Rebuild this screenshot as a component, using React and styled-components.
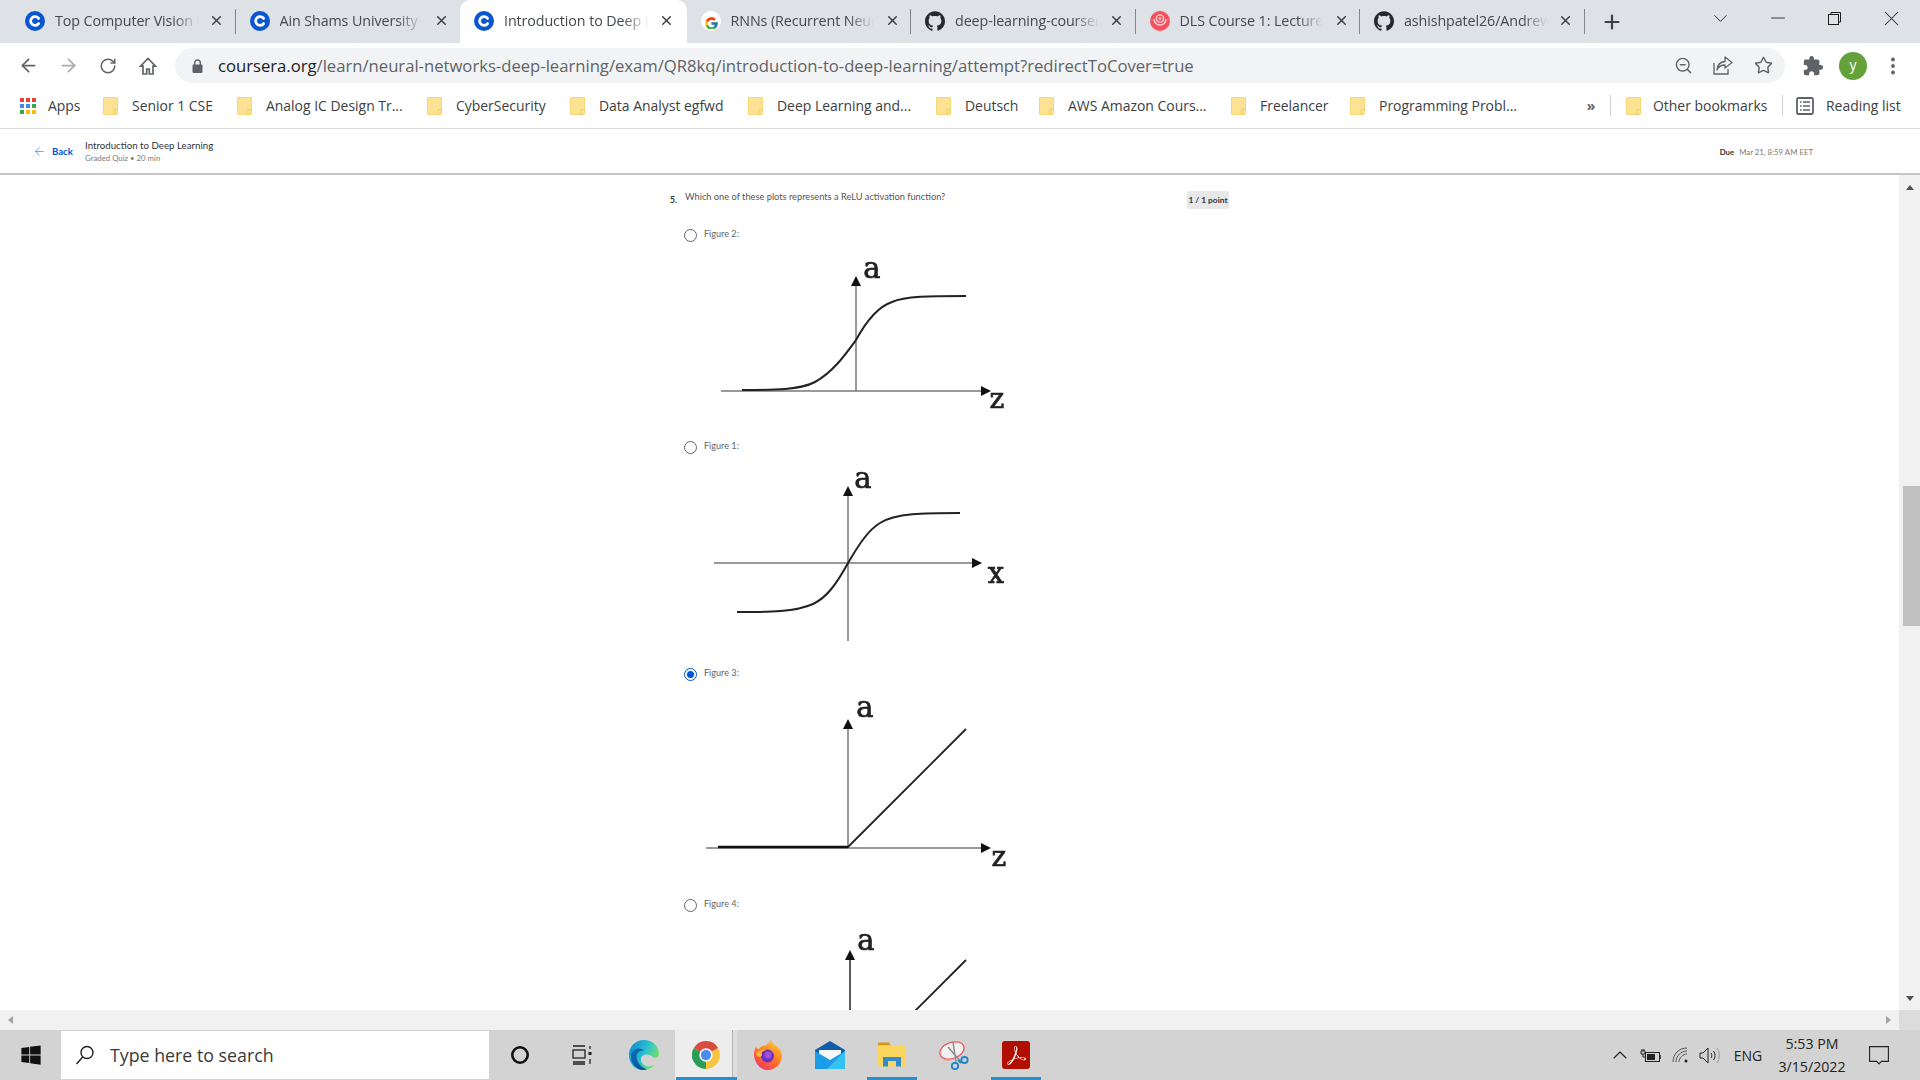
import React from "react";
import styled, { createGlobalStyle } from "styled-components";
import { ArrowLeft, ArrowRight, RotateCw, ZoomOut, Star, X, Plus, ChevronDown, ChevronUp, Minus } from "lucide-react";
import { FaWindows } from "react-icons/fa";
import { FcGoogle } from "react-icons/fc";
import { SiGithub, SiAdobeacrobatreader } from "react-icons/si";
import { MdExtension } from "react-icons/md";

const UI = `"Open Sans", "Noto Sans", sans-serif`;
const WEB = `"Source Sans Pro", "Lato", "Noto Sans", sans-serif`;

const Global = createGlobalStyle`
  html, body { margin: 0; padding: 0; height: 100%; overflow: hidden; background: #fff; }
  #root { height: 100%; }
  * { box-sizing: border-box; }
`;

const Screen = styled.div`
  width: 1920px; height: 1080px; display: flex; flex-direction: column; font-family: ${UI}; overflow: hidden;
`;

/* ---------- tab strip ---------- */
const TabStrip = styled.div`
  height: 43px; flex: none; background: #dee1e6; display: flex; padding-left: 11px; align-items: stretch;
`;
const Tab = styled.div`
  position: relative; flex: none; width: ${(p) => (p.$active ? 226.5 : 224.5)}px; height: 43px; display: flex; align-items: center;
  padding: 0 ${(p) => (p.$active ? 12 : 11)}px 2px 14px; gap: 10px;
  background: ${(p) => (p.$active ? "#fff" : "transparent")};
  border-radius: ${(p) => (p.$active ? "10px 10px 0 0" : "0")};
  &::after {
    content: ""; position: absolute; right: 0; top: 9px; width: 1px; height: 25px;
    background: ${(p) => (p.$sep ? "#80868b" : "transparent")};
  }
`;
const Fav = styled.span`
  flex: none; width: 20px; height: 20px; display: flex; align-items: center; justify-content: center;
`;
const TabTitle = styled.span`
  flex: 1; min-width: 0; overflow: hidden; white-space: nowrap; font-size: 14.3px; color: #45494e; letter-spacing: -0.1px;
  -webkit-mask-image: linear-gradient(to right, #000 82%, transparent 100%);
  mask-image: linear-gradient(to right, #000 82%, transparent 100%);
`;
const TabClose = styled.span`
  flex: none; width: 16px; height: 16px; display: flex; align-items: center; justify-content: center; color: #3c4043;
`;
const NewTab = styled.span`
  flex: none; width: 54px; display: flex; align-items: center; justify-content: center; color: #3c4043;
`;
const WindowControls = styled.div`
  margin-left: auto; display: flex; height: 36px;
`;
const WinButton = styled.span`
  width: ${(p) => p.$w || 57}px; height: 36px; display: flex; align-items: center; justify-content: center; color: #2b2b2b;
`;

/* ---------- toolbar ---------- */
const Toolbar = styled.div`
  height: 41px; flex: none; background: #fff; display: flex; align-items: flex-start; padding: 5px 7px 0 8px;
`;
const NavButton = styled.span`
  flex: none; width: 40px; height: 35px; display: flex; align-items: center; justify-content: center;
  color: ${(p) => (p.$disabled ? "#a8abaf" : "#5f6368")};
`;
const AddressPill = styled.div`
  flex: 1; height: 35px; margin: 0 8px 0 7px; background: #f1f3f4; border-radius: 18px; display: flex; align-items: center;
  padding: 0 2px 0 15px;
`;
const LockBox = styled.span`
  flex: none; width: 14px; display: flex; justify-content: center; margin-right: 14px;
`;
const Url = styled.span`
  flex: 1; font-size: 16.7px; white-space: nowrap; color: #5f6368; letter-spacing: -0.02px;
`;
const UrlHost = styled.span`
  color: #202124;
`;
const Avatar = styled.span`
  width: 28px; height: 28px; border-radius: 50%; background: #64a13a; color: #fff; font-size: 14px;
  display: flex; align-items: center; justify-content: center; padding-bottom: 3px;
`;

/* ---------- bookmarks ---------- */
const BookmarkBar = styled.div`
  height: 45px; flex: none; background: #fff; display: flex; align-items: center; padding: 0 0 1px 20px; border-bottom: 1px solid #dadce0;
`;
const Bookmark = styled.span`
  flex: none; width: ${(p) => (p.$w ? `${p.$w}px` : "auto")}; display: flex; align-items: center; gap: ${(p) => p.$gap || 14}px;
  font-size: 13.95px; color: #3c4043; white-space: nowrap; margin-left: ${(p) => p.$ml || 0}px;
`;
const AppsGrid = styled.span`
  display: grid; grid-template-columns: repeat(3, 4px); grid-auto-rows: 4px; gap: 2px; flex: none; width: 16px;
`;
const AppsDot = styled.i`
  display: block; background: ${(p) => p.$c};
`;
const Overflow = styled.span`
  flex: none; width: 16px; text-align: center; font-size: 14px; font-weight: 700; color: #5f6368;
`;
const BarSep = styled.span`
  flex: none; width: 1px; height: 21px; background: #cfd1d4; margin-left: ${(p) => p.$ml || 0}px;
`;

/* ---------- course header ---------- */
const CourseHeader = styled.header`
  height: 46px; flex: none; background: #fff; border-bottom: 2px solid #c6c6c6; display: flex; align-items: center;
  padding: 0 107px 0 33px; font-family: ${WEB};
`;
const BackLink = styled.span`
  display: flex; align-items: center; gap: 6px; color: #0056d2; font-size: 9.6px; font-weight: 700; width: 52px;
`;
const CourseInfo = styled.div`
  display: flex; flex-direction: column; gap: 4px; margin-top: 1px;
`;
const CourseTitle = styled.span`
  font-size: 9.7px; color: #333; line-height: 10px;
`;
const CourseSub = styled.span`
  font-size: 7.8px; color: #7a7a7a; line-height: 9px;
`;
const DueInfo = styled.span`
  margin: 2px 0 0 auto; font-size: 7.8px; color: #7a7a7a; display: flex; gap: 5px;
`;
const DueLabel = styled.b`
  color: #333; font-weight: 700;
`;

/* ---------- page ---------- */
const PageArea = styled.div`
  flex: 1; min-height: 0; display: flex; flex-direction: column;
`;
const PageRow = styled.div`
  flex: 1; min-height: 0; display: flex;
`;
const Content = styled.main`
  flex: 1; min-width: 0; overflow: hidden; padding: 16px 0 0 670px; font-family: ${WEB};
`;
const QuestionRow = styled.div`
  width: 559px; height: 34px; display: flex; align-items: flex-start;
`;
const QNumber = styled.b`
  width: 15px; font-size: 8.6px; color: #333; margin-top: 2px; line-height: 14px;
`;
const QText = styled.span`
  font-size: 9.25px; color: #555; line-height: 12px;
`;
const PointBadge = styled.span`
  margin-left: auto; width: 42px; height: 18px; background: #e8e8e8; border-radius: 2px; font-size: 8.4px; font-weight: 700; color: #333;
  display: flex; align-items: center; justify-content: center;
`;
const OptionRow = styled.div`
  height: 20px; display: flex; align-items: center; padding-left: 14px;
`;
const Radio = styled.span`
  flex: none; width: 13px; height: 13px; border-radius: 50%; border: 1.4px solid ${(p) => (p.$on ? "#0056d2" : "#666")}; display: flex; align-items: center; justify-content: center;
  &::after { content: ""; width: 7px; height: 7px; border-radius: 50%; background: ${(p) => (p.$on ? "#0056d2" : "transparent")}; }
`;
const OptionLabel = styled.span`
  margin: -3px 0 0 7px; font-size: 9.1px; color: #666;
`;
const PlotBox = styled.svg`
  display: block; margin-left: 30px; filter: blur(0.35px);
`;
const PlotLetter = styled.text`
  font-family: "DejaVu Serif", "Liberation Serif", serif; fill: #222; stroke: #222; stroke-width: 0.7px; text-anchor: middle;
`;

/* ---------- scrollbars ---------- */
const VScroll = styled.div`
  flex: none; width: 21px; background: #f1f1f1; display: flex; flex-direction: column; align-items: center; padding-top: 10px;
`;
const Thumb = styled.div`
  width: 17px; align-self: flex-end; height: 140px; background: #c1c1c1; margin-top: 296px;
`;
const ScrollArrow = styled.span`
  width: 0; height: 0; border-left: 4.5px solid transparent; border-right: 4.5px solid transparent;
  ${(p) => (p.$up ? "border-bottom: 5px solid #505050;" : "border-top: 5px solid #505050;")}
  margin-top: ${(p) => p.$mt || 0}px;
`;
const HScroll = styled.div`
  flex: none; height: 20px; background: #f1f1f1; display: flex; align-items: center; padding-left: 8px;
`;
const HArrow = styled.span`
  width: 0; height: 0; border-top: 4.5px solid transparent; border-bottom: 4.5px solid transparent;
  ${(p) => (p.$left ? "border-right: 5px solid #a3a3a3;" : "border-left: 5px solid #a3a3a3; margin: 0 8px 0 auto;")}
`;
const HCorner = styled.span`
  flex: none; width: 21px; background: #dcdcdc; height: 20px;
`;

/* ---------- taskbar ---------- */
const Taskbar = styled.footer`
  height: 50px; flex: none; background: #d3d3d3; display: flex; align-items: stretch; font-family: ${UI};
`;
const StartSlot = styled.span`
  flex: none; width: 61px; display: flex; align-items: center; justify-content: center;
`;
const SearchBox = styled.div`
  flex: none; width: 428px; margin-top: 1px; margin-bottom: 1px; background: #fff; display: flex; align-items: center; padding-left: 14px; gap: 15px;
  font-size: 17.8px; color: #3a3a3a;
`;
const TaskSlot = styled.span`
  position: relative; flex: none; width: 62px; display: flex; align-items: center; justify-content: center;
  background: ${(p) => (p.$focus ? "linear-gradient(to right, #ededed 57px, #b5b5b5 57px, #b5b5b5 58px, #dedede 58px)" : "transparent")};
  &::after {
    content: ""; position: absolute; bottom: 0; height: 3px; background: #2a90cc;
    left: ${(p) => (p.$focus ? 1 : 6)}px; right: ${(p) => (p.$focus ? 0 : 6)}px;
    display: ${(p) => (p.$open ? "block" : "none")};
  }
`;
const Tray = styled.div`
  margin-left: auto; display: flex; align-items: stretch; padding-right: 13px; color: #222;
`;
const TraySlot = styled.span`
  flex: none; width: ${(p) => p.$w}px; display: flex; align-items: center; justify-content: center; font-size: 14px;
`;
const Clock = styled.span`
  flex: none; width: 78px; display: flex; flex-direction: column; align-items: center; justify-content: center; font-size: 14.2px; line-height: 23px; color: #222;
`;

/* ---------- icons ---------- */
const CourseraIcon = () => (
  <svg width="20" height="20" viewBox="0 0 20 20">
    <circle cx="10" cy="10" r="10" fill="#0a56d0" />
    <path d="M13.6 12.6a4.4 4.4 0 1 1 0-5.2" fill="none" stroke="#fff" strokeWidth="2.8" strokeLinecap="round" />
  </svg>
);
const DlsIcon = () => (
  <svg width="20" height="20" viewBox="0 0 20 20">
    <circle cx="10" cy="10" r="10" fill="#f4525f" />
    <path d="M4 8a6 6 0 0 0 12 0" fill="none" stroke="#fbd3d6" strokeWidth="1.4" />
    <circle cx="10" cy="7.5" r="3.6" fill="none" stroke="#fbd3d6" strokeWidth="1.4" />
    <circle cx="10" cy="7.5" r="1.3" fill="#fbd3d6" />
  </svg>
);
const GoogleIcon = () => (
  <svg width="20" height="20" viewBox="0 0 20 20">
    <circle cx="10" cy="10" r="10" fill="#fff" />
    <foreignObject x="2.5" y="2.5" width="15" height="15"><FcGoogle size={15} /></foreignObject>
  </svg>
);
const LockIcon = () => (
  <svg width="11" height="14" viewBox="0 0 11 14">
    <rect x="0.5" y="5.5" width="10" height="8.5" rx="1.2" fill="#5f6368" />
    <path d="M2.7 6V3.8a2.8 2.8 0 0 1 5.6 0V6" fill="none" stroke="#5f6368" strokeWidth="1.4" />
  </svg>
);
const HomeIcon = () => (
  <svg width="18" height="18" viewBox="0 0 18 18" fill="none" stroke="#5f6368" strokeWidth="1.7" strokeLinejoin="miter">
    <path d="M9 1.5L1.5 9.2H4V17h3.700v-5h2.600v5H14V9.200h2.500z" />
  </svg>
);
const ShareIcon = () => (
  <svg width="20" height="19" viewBox="0 0 20 19" fill="none" stroke="#5f6368" strokeWidth="1.3">
    <path d="M1 7v11h14v-5" />
    <path d="M12 1l7 5.5-7 5.5V9c-4 0-6.5 1.2-8 5 .4-5 3.5-8.2 8-8.5z" strokeLinejoin="round" />
  </svg>
);
const Folder = () => (
  <svg width="15" height="18" viewBox="0 0 15 18" style={{ flex: "none" }}>
    <path d="M1 0.5h13a.5.5 0 0 1 .5.5v11.5l-4 5H1a.5.5 0 0 1-.5-.5V1a.5.5 0 0 1 .5-.5z" fill="#fde293" stroke="#f7d774" />
    <path d="M11 12.5h3.5v3.5a1.5 1.5 0 0 1-1.5 1.5h-2z" fill="#fde293" stroke="#f2c94c" strokeWidth="0.8" />
  </svg>
);
const ReadingIcon = () => (
  <svg width="18" height="18" viewBox="0 0 18 18" style={{ flex: "none" }}>
    <rect x="1" y="1" width="16" height="16" rx="1.5" fill="none" stroke="#5f6368" strokeWidth="1.8" />
    <path d="M4 5h1.5M7 5h7M4 9h1.5M7 9h7M4 13h1.5M7 13h7" stroke="#5f6368" strokeWidth="1.4" />
  </svg>
);
const KebabIcon = () => (
  <svg width="6" height="18" viewBox="0 0 6 18" fill="#5f6368">
    <circle cx="3" cy="2.5" r="1.9" /><circle cx="3" cy="9" r="1.9" /><circle cx="3" cy="15.5" r="1.9" />
  </svg>
);
const RestoreIcon = () => (
  <svg width="13" height="13" viewBox="0 0 13 13" fill="none" stroke="#1c1c1c" strokeWidth="1">
    <rect x="0.5" y="2.5" width="10" height="10" /><path d="M3 2.5V0.5h9.5V10h-2" />
  </svg>
);
const SearchGlass = () => (
  <svg width="20" height="20" viewBox="0 0 20 20" fill="none" stroke="#222" strokeWidth="1.4">
    <circle cx="12" cy="7.5" r="6" /><path d="M7.7 12L1.5 19" />
  </svg>
);
const TaskViewIcon = () => (
  <svg width="20" height="20" viewBox="0 0 20 20" fill="none" stroke="#222" strokeWidth="1.3">
    <path d="M1 1h12M1 17h12" /><rect x="1" y="5" width="12" height="8" /><path d="M18 1v3M18 14v5M1 19h12" />
    <rect x="16.5" y="7" width="3" height="3" fill="#222" stroke="none" />
  </svg>
);
const EdgeIcon = () => (
  <svg width="32" height="32" viewBox="0 0 32 32">
    <defs>
      <linearGradient id="edgeA" x1="0.1" y1="0.2" x2="0.9" y2="0.6">
        <stop offset="0" stopColor="#1392d6" /><stop offset="0.55" stopColor="#2dc3cf" /><stop offset="1" stopColor="#70dd72" />
      </linearGradient>
      <linearGradient id="edgeB" x1="0" y1="0" x2="1" y2="1">
        <stop offset="0" stopColor="#0a6fb8" /><stop offset="1" stopColor="#0b4d92" />
      </linearGradient>
    </defs>
    <path d="M16 1C7 1 1 8 1 16c0 9 6.5 15 14 15 4.5 0 8.5-1.6 11.5-5-4 2-8 2-11-.5-3-2.5-3.5-7-.5-9 3-2 8-1 10 1.500 1.500 1.500 6 1 6-3C31 7 24 1 16 1z" fill="url(#edgeA)" />
    <path d="M15 31C8 31 2 24 3 16c2-7 9-8 13-4.500-4-.5-8 2-7.500 7 .5 5 5 10 10.500 12-1.200.3-2.600.5-4 .5z" fill="url(#edgeB)" />
  </svg>
);
const ChromeIcon = () => (
  <svg width="28" height="28" viewBox="0 0 24 24">
    <path d="M12 12L1.6 6A12 12 0 0 1 22.39 6Z" fill="#db4b3e" />
    <path d="M12 12L22.39 6A12 12 0 0 1 12 24Z" fill="#f5c53f" />
    <path d="M12 12L12 24A12 12 0 0 1 1.6 6Z" fill="#2c9d57" />
    <circle cx="12" cy="12" r="5.700" fill="#fff" />
    <circle cx="12" cy="12" r="4.400" fill="#4c8bf0" />
  </svg>
);
const FirefoxIcon = () => (
  <svg width="30" height="30" viewBox="0 0 30 30">
    <defs>
      <linearGradient id="ffA" x1="0.8" y1="0" x2="0.2" y2="1">
        <stop offset="0" stopColor="#ffcf3a" /><stop offset="0.5" stopColor="#ff7a1f" /><stop offset="1" stopColor="#f0306a" />
      </linearGradient>
    </defs>
    <path d="M1 14c0-3 1-6 2.500-7.500 0 1.500 1 2.500 2 3C7.500 6 11 5 13 5.500 15 2.500 17.500 1 18.500 0c0 2 1 3 3 4.500 4 3 7.500 6 7.500 11.500 0 7.500-6.500 14-14 14S1 23 1 14z" fill="url(#ffA)" />
    <circle cx="14.500" cy="16" r="6.500" fill="#6a2fc4" />
    <circle cx="15" cy="15" r="3.500" fill="#a34fd8" />
    <path d="M3 13c3-3 7-4 11-3-2 0-5 1.500-6 3 2 1 1 3-1 4C5.500 17 3.500 15.500 3 13z" fill="#ffb53a" />
  </svg>
);
const MailIcon = () => (
  <svg width="30" height="28" viewBox="0 0 30 28">
    <path d="M15 0l15 9v19H0V9z" fill="#0f5ca8" />
    <path d="M4 9h22v6l-11 5-11-5z" fill="#f4f7fa" />
    <path d="M0 10l15 9 15-9v18H0z" fill="#1c9be6" />
    <path d="M30 10v18H12z" fill="#35c1f1" />
  </svg>
);
const ExplorerIcon = () => (
  <svg width="28" height="26" viewBox="0 0 28 26">
    <path d="M0 1.500a1 1 0 0 1 1-1h10l2 3h-13z" fill="#d9990e" />
    <rect x="0" y="3.500" width="28" height="21" rx="1" fill="#fcd55f" />
    <path d="M5 24.500V15h18v9.500h-5V19h-8v5.500z" fill="#2f8dcd" />
  </svg>
);
const SnipIcon = () => (
  <svg width="30" height="32" viewBox="0 0 30 32" fill="none">
    <ellipse cx="13" cy="11.500" rx="12.500" ry="8" transform="rotate(-20 13 11.500)" fill="#f0f0f0" stroke="#e65b5b" strokeWidth="1.300" />
    <path d="M1 17c3 5 10 5 16 2" stroke="#e9a0a0" strokeWidth="1.300" />
    <path d="M14 3l3 20M9 8l13 15" stroke="#8c8c8c" strokeWidth="1.500" />
    <circle cx="16" cy="27" r="3.200" stroke="#1f85c8" strokeWidth="1.800" />
    <path d="M19 21l3 3" stroke="#1f85c8" strokeWidth="1.800" />
    <ellipse cx="25.500" cy="21" rx="3.200" ry="3" stroke="#1f85c8" strokeWidth="1.800" />
  </svg>
);
const AcrobatTile = styled.span`
  width: 28px; height: 28px; border-radius: 3px; background: #b00f00; color: #fff; display: flex; align-items: center; justify-content: center;
`;
const BatteryIcon = () => (
  <svg width="21" height="15" viewBox="0 0 21 15" fill="none" stroke="#222">
    <rect x="5.500" y="4.500" width="14" height="9" /><rect x="7" y="6" width="8" height="6" fill="#222" stroke="none" />
    <path d="M20 7v4" strokeWidth="1.500" /><path d="M1 3h4v3H1zM2 1v2M4 1v2M3 6v3h3" strokeWidth="1" />
  </svg>
);
const WifiIcon = () => (
  <svg width="17" height="16" viewBox="0 0 17 16" fill="none" stroke="#555" strokeWidth="1">
    <path d="M1 15C1 7 7 1 15 1M4 15C4 9 9 4 15 4M7 15c0-4 4-8 8-8" /><circle cx="14" cy="14" r="1.500" fill="#222" stroke="none" />
  </svg>
);
const VolumeIcon = () => (
  <svg width="21" height="17" viewBox="0 0 21 17" fill="none" stroke="#222" strokeWidth="1">
    <path d="M1 6h3l5-5v15l-5-5H1z" /><path d="M12 6c1 1.500 1 3.500 0 5M14.500 4c2 2.500 2 6.500 0 9" /><path d="M18 1c3 4 3 11 0 15" stroke="#999" />
  </svg>
);
const NotifyIcon = () => (
  <svg width="20" height="19" viewBox="0 0 20 19" fill="none" stroke="#222" strokeWidth="1.100">
    <path d="M0.600 0.600h18.800v14.800h-7l-2.400 2.500-2.400-2.500h-7z" />
  </svg>
);

/* ---------- plots ---------- */
const Arrow = ({ d }) => <path d={d} fill="#111" />;

const PlotSigmoidZ = () => (
  <PlotBox width="340" height="192" viewBox="700 245 340 192">
    <path d="M721 391H985" stroke="#999" strokeWidth="2" />
    <path d="M856 391V285" stroke="#777" strokeWidth="1.500" />
    <Arrow d="M851 286l5-10 5 10z" />
    <Arrow d="M981 386l10 5-10 5z" />
    <path d="M742 390C775 390 800 390 815 382C833 372 845 355 856 340C868 318 880 306 892 302C905 296 930 296 966 296" fill="none" stroke="#222" strokeWidth="2" />
    <PlotLetter x="872" y="278" fontSize="29">a</PlotLetter>
    <PlotLetter x="997" y="408" fontSize="28">z</PlotLetter>
  </PlotBox>
);
const PlotSigmoidX = () => (
  <PlotBox width="340" height="207" viewBox="700 457 340 207">
    <path d="M714 563H975" stroke="#999" strokeWidth="2" />
    <path d="M848 641V495" stroke="#999" strokeWidth="2" />
    <Arrow d="M843 496l5-10 5 10z" />
    <Arrow d="M972 558l10 5-10 5z" />
    <path d="M737 612C770 612 795 612 813 604C826 598 836 585 848 563C858 546 868 530 880 523C895 513 925 513 960 513" fill="none" stroke="#222" strokeWidth="2" />
    <PlotLetter x="863" y="488" fontSize="29">a</PlotLetter>
    <PlotLetter x="996" y="583" fontSize="29">x</PlotLetter>
  </PlotBox>
);
const PlotRelu = () => (
  <PlotBox width="340" height="211" viewBox="700 684 340 211">
    <path d="M706 848H984" stroke="#777" strokeWidth="1.500" />
    <path d="M848 848V728" stroke="#777" strokeWidth="1.500" />
    <Arrow d="M843 729l5-10 5 10z" />
    <Arrow d="M981 843l10 5-10 5z" />
    <path d="M718 847H848L966 729" fill="none" stroke="#222" strokeWidth="1.800" />
    <path d="M718 847H848" stroke="#111" strokeWidth="2.500" />
    <PlotLetter x="865" y="717" fontSize="29">a</PlotLetter>
    <PlotLetter x="999" y="866" fontSize="28">z</PlotLetter>
  </PlotBox>
);
const PlotCut = () => (
  <PlotBox width="340" height="210" viewBox="700 915 340 210">
    <path d="M850 1100V958" stroke="#222" strokeWidth="1.500" />
    <Arrow d="M845 960l5-10 5 10z" />
    <path d="M966 960L830 1096" fill="none" stroke="#222" strokeWidth="1.800" />
    <PlotLetter x="866" y="950" fontSize="29">a</PlotLetter>
  </PlotBox>
);

const tabs = [
  { icon: <CourseraIcon />, title: "Top Computer Vision Courses", sep: true },
  { icon: <CourseraIcon />, title: "Ain Shams University | Coursera" },
  { icon: <CourseraIcon />, title: "Introduction to Deep Learning", active: true },
  { icon: <GoogleIcon />, title: "RNNs (Recurrent Neural Networks)", sep: true },
  { icon: <SiGithub size={20} color="#24292e" />, title: "deep-learning-coursera/Neural", sep: true },
  { icon: <DlsIcon />, title: "DLS Course 1: Lecture Notes", sep: true },
  { icon: <SiGithub size={20} color="#24292e" />, title: "ashishpatel26/Andrew-NG", sep: true },
];

const bookmarks = [
  ["Senior 1 CSE", 134], ["Analog IC Design Tr...", 190], ["CyberSecurity", 143], ["Data Analyst egfwd", 178],
  ["Deep Learning and...", 188], ["Deutsch", 103], ["AWS Amazon Cours...", 192], ["Freelancer", 119], ["Programming Probl...", 233],
];
const appColors = ["#ea4335", "#ea4335", "#ea4335", "#4285f4", "#4285f4", "#34a853", "#34a853", "#fbbc04", "#fbbc04"];

export default function App() {
  return (
    <Screen>
      <Global />
      <TabStrip>
        {tabs.map((t) => (
          <Tab key={t.title} $active={t.active} $sep={t.sep}>
            <Fav>{t.icon}</Fav>
            <TabTitle>{t.title}</TabTitle>
            <TabClose><X size={15} strokeWidth={2.4} /></TabClose>
          </Tab>
        ))}
        <NewTab><Plus size={22} strokeWidth={2.4} /></NewTab>
        <WindowControls>
          <WinButton $w={58}><ChevronDown size={23} strokeWidth={1} /></WinButton>
          <WinButton><Minus size={22} strokeWidth={1} /></WinButton>
          <WinButton><RestoreIcon /></WinButton>
          <WinButton><X size={25} strokeWidth={1} /></WinButton>
        </WindowControls>
      </TabStrip>

      <Toolbar>
        <NavButton><ArrowLeft size={21} strokeWidth={2} /></NavButton>
        <NavButton $disabled><ArrowRight size={21} strokeWidth={2} /></NavButton>
        <NavButton><RotateCw size={18} strokeWidth={2} /></NavButton>
        <NavButton><HomeIcon /></NavButton>
        <AddressPill>
          <LockBox><LockIcon /></LockBox>
          <Url><UrlHost>coursera.org</UrlHost>/learn/neural-networks-deep-learning/exam/QR8kq/introduction-to-deep-learning/attempt?redirectToCover=true</Url>
          <NavButton><ZoomOut size={19} strokeWidth={1.800} /></NavButton>
          <NavButton><ShareIcon /></NavButton>
          <NavButton><Star size={19} strokeWidth={1.800} /></NavButton>
        </AddressPill>
        <NavButton><MdExtension size={22} /></NavButton>
        <NavButton><Avatar>y</Avatar></NavButton>
        <NavButton><KebabIcon /></NavButton>
      </Toolbar>

      <BookmarkBar>
        <Bookmark $w={83} $gap={12}>
          <AppsGrid>{appColors.map((c, i) => <AppsDot key={i} $c={c} />)}</AppsGrid>
          Apps
        </Bookmark>
        {bookmarks.map(([name, w]) => (
          <Bookmark key={name} $w={w}><Folder />{name}</Bookmark>
        ))}
        <Overflow>»</Overflow>
        <BarSep $ml={11} />
        <Bookmark $w={156} $ml={15} $gap={12}><Folder />Other bookmarks</Bookmark>
        <BarSep />
        <Bookmark $ml={13} $gap={12}><ReadingIcon />Reading list</Bookmark>
      </BookmarkBar>

      <CourseHeader>
        <BackLink><ArrowLeft size={13} strokeWidth={1.300} color="#3a7fe0" />Back</BackLink>
        <CourseInfo>
          <CourseTitle>Introduction to Deep Learning</CourseTitle>
          <CourseSub>Graded Quiz • 20 min</CourseSub>
        </CourseInfo>
        <DueInfo><DueLabel>Due</DueLabel>Mar 21, 8:59 AM EET</DueInfo>
      </CourseHeader>

      <PageArea>
        <PageRow>
          <Content>
            <QuestionRow>
              <QNumber>5.</QNumber>
              <QText>Which one of these plots represents a ReLU activation function?</QText>
              <PointBadge>1 / 1 point</PointBadge>
            </QuestionRow>
            <OptionRow><Radio /><OptionLabel>Figure 2:</OptionLabel></OptionRow>
            <PlotSigmoidZ />
            <OptionRow><Radio /><OptionLabel>Figure 1:</OptionLabel></OptionRow>
            <PlotSigmoidX />
            <OptionRow><Radio $on /><OptionLabel>Figure 3:</OptionLabel></OptionRow>
            <PlotRelu />
            <OptionRow><Radio /><OptionLabel>Figure 4:</OptionLabel></OptionRow>
            <PlotCut />
          </Content>
          <VScroll>
            <ScrollArrow $up />
            <Thumb />
            <ScrollArrow $mt={370} />
          </VScroll>
        </PageRow>
        <HScroll>
          <HArrow $left />
          <HArrow />
          <HCorner />
        </HScroll>
      </PageArea>

      <Taskbar>
        <StartSlot><FaWindows size={22} color="#111" /></StartSlot>
        <SearchBox><SearchGlass />Type here to search</SearchBox>
        <TaskSlot>
          <svg width="20" height="20" viewBox="0 0 20 20"><circle cx="10" cy="10" r="7.700" fill="none" stroke="#111" strokeWidth="2.600" /></svg>
        </TaskSlot>
        <TaskSlot><TaskViewIcon /></TaskSlot>
        <TaskSlot><EdgeIcon /></TaskSlot>
        <TaskSlot $focus $open><ChromeIcon /></TaskSlot>
        <TaskSlot><FirefoxIcon /></TaskSlot>
        <TaskSlot><MailIcon /></TaskSlot>
        <TaskSlot $open><ExplorerIcon /></TaskSlot>
        <TaskSlot><SnipIcon /></TaskSlot>
        <TaskSlot $open><AcrobatTile><SiAdobeacrobatreader size={19} /></AcrobatTile></TaskSlot>
        <Tray>
          <TraySlot $w={30}><ChevronUp size={24} strokeWidth={1.100} /></TraySlot>
          <TraySlot $w={30}><BatteryIcon /></TraySlot>
          <TraySlot $w={30}><WifiIcon /></TraySlot>
          <TraySlot $w={28}><VolumeIcon /></TraySlot>
          <TraySlot $w={50}>ENG</TraySlot>
          <Clock><span>5:53 PM</span><span>3/15/2022</span></Clock>
          <TraySlot $w={56}><NotifyIcon /></TraySlot>
        </Tray>
      </Taskbar>
    </Screen>
  );
}
